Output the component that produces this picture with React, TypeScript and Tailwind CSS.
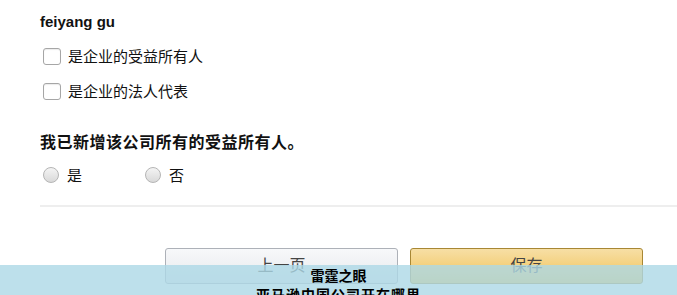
import React from "react";

function CheckRow({ label }: { label: string }) {
  return (
    <label className="flex items-center gap-[7px] h-[17px]">
      <span className="w-[18px] h-[17px] rounded-[3px] border border-[#a6a6a6] bg-white shadow-[inset_0_1px_1px_rgba(0,0,0,0.08)]" />
      <span className="text-[15px] leading-none text-[#111]">{label}</span>
    </label>
  );
}

function Radio({ label }: { label: string }) {
  return (
    <label className="flex items-center gap-[8px]">
      <span className="w-4 h-4 rounded-full border border-[#b5b5b5] bg-gradient-to-b from-[#f4f4f4] to-[#d9d9d9]" />
      <span className="text-[15px] leading-none text-[#111]">{label}</span>
    </label>
  );
}

export default function App() {
  return (
    <div
      className="relative w-[677px] h-[295px] overflow-hidden bg-white"
      style={{ fontFamily: '"Liberation Sans", "Noto Sans CJK SC", sans-serif' }}
    >
      <div className="pl-10 pt-[13px]">
        <div className="text-[15px] font-bold leading-[18px] text-[#111]">feiyang gu</div>

        <div className="flex flex-col gap-[18px] mt-[17px] pl-[3px]">
          <CheckRow label="是企业的受益所有人" />
          <CheckRow label="是企业的法人代表" />
        </div>

        <div className="mt-[33px] text-[16px] font-bold leading-5 tracking-[0.5px] text-[#111]">
          我已新增该公司所有的受益所有人。
        </div>

        <div className="flex items-center gap-[63px] mt-[14px] pl-[3px]">
          <Radio label="是" />
          <Radio label="否" />
        </div>

        <div className="mt-[22px] h-[2px] bg-[#eeeeee]" />
      </div>

      <div className="flex justify-end gap-3 pr-[34px] mt-[41px]">
        <button className="w-[233px] h-[36px] rounded-[3px] border border-[#adb1b8] bg-gradient-to-b from-[#f7f8fa] to-[#e7e9ec] text-[16px] text-[#444]">
          上一页
        </button>
        <button className="w-[233px] h-[36px] rounded-[3px] border border-[#a88734] bg-gradient-to-b from-[#f7dfa5] to-[#f0c14b] text-[16px] text-[#444]">
          保存
        </button>
      </div>

      <div
        className="absolute left-0 right-0 top-[265px] h-[30px] bg-[#add8e6]/80 flex flex-col items-center text-[14px] font-bold leading-4 text-black"
        style={{ fontFamily: '"Noto Sans CJK SC", sans-serif' }}
      >
        <div className="pt-[2px]">雷霆之眼</div>
        <div className="mt-[3px] tracking-[1px]">亚马逊中国公司开在哪里</div>
      </div>
    </div>
  );
}
